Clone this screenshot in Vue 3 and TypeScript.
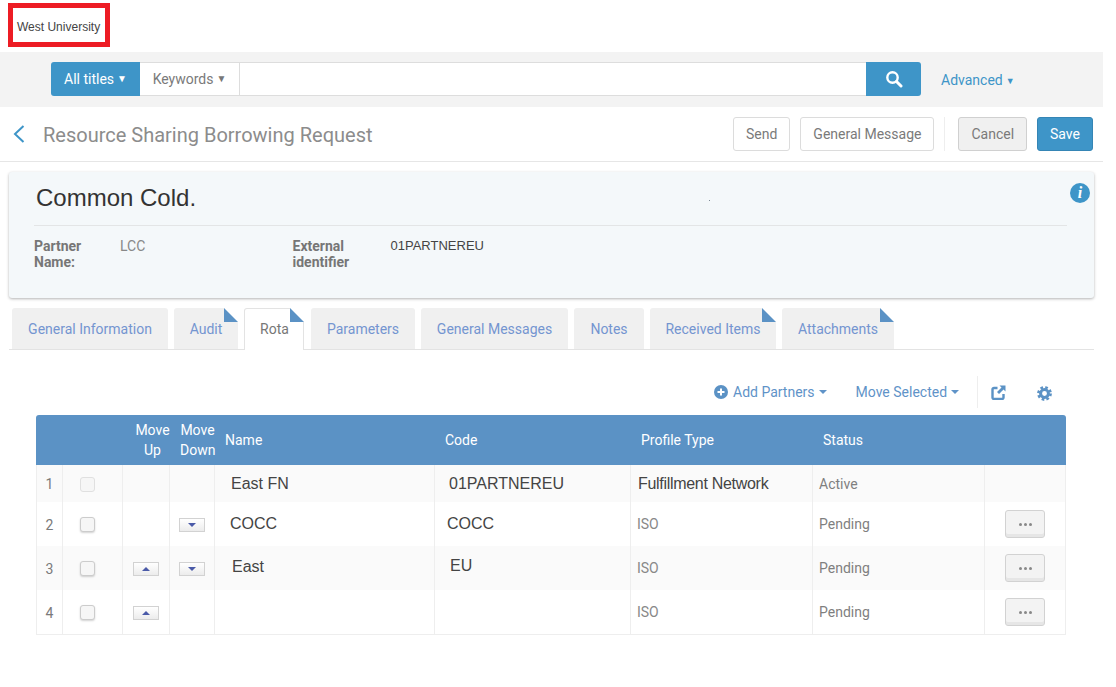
<script setup lang="ts">
interface Tab { label: string; active?: boolean; flagged?: boolean; cls: string }
interface Row {
  n: number; name: string; nameCls: string; code: string; codeCls: string; profile: string; profileBig?: boolean;
  status: string; up: boolean; down: boolean; disabled?: boolean; menu: boolean;
}
const tabs: Tab[] = [
  { label: 'General Information', cls: 't1' },
  { label: 'Audit', flagged: true, cls: 't2' },
  { label: 'Rota', active: true, flagged: true, cls: 't3' },
  { label: 'Parameters', cls: 't4' },
  { label: 'General Messages', cls: 't5' },
  { label: 'Notes', cls: 't6' },
  { label: 'Received Items', flagged: true, cls: 't7' },
  { label: 'Attachments', flagged: true, cls: 't8' },
]
const rows: Row[] = [
  { n: 1, name: 'East FN', nameCls: 'n1', code: '01PARTNEREU', codeCls: 'c1', profile: 'Fulfillment Network', profileBig: true, status: 'Active', up: false, down: false, disabled: true, menu: false },
  { n: 2, name: 'COCC', nameCls: 'n2', code: 'COCC', codeCls: 'c2', profile: 'ISO', status: 'Pending', up: false, down: true, menu: true },
  { n: 3, name: 'East', nameCls: 'n3', code: 'EU', codeCls: 'c3', profile: 'ISO', status: 'Pending', up: true, down: true, menu: true },
  { n: 4, name: '', nameCls: 'n2', code: '', codeCls: 'c2', profile: 'ISO', status: 'Pending', up: true, down: false, menu: true },
]
</script>

<template>
  <div class="page">
    <div class="brand"><div class="logo">West University</div></div>

    <div class="searchbar">
      <div class="searchgroup">
        <button class="scope">All titles<span class="caret-up">▼</span></button>
        <button class="field">Keywords<span class="caret-up grey">▼</span></button>
        <input class="query" type="text" />
        <button class="go" aria-label="Search">
          <svg width="18" height="18" viewBox="0 0 18 18"><circle cx="7.5" cy="7.5" r="5.2" fill="none" stroke="#fff" stroke-width="2.4"/><path d="M11.5 11.5l4.5 4.5" stroke="#fff" stroke-width="3" stroke-linecap="round"/></svg>
        </button>
      </div>
      <a class="advanced">Advanced<span class="adv-caret">▼</span></a>
    </div>

    <header class="pagehead">
      <svg class="back" width="14" height="20" viewBox="0 0 14 20"><path d="M11.5 2L3 10l8.500 8" fill="none" stroke="#3e95c8" stroke-width="2"/></svg>
      <h1>Resource Sharing Borrowing Request</h1>
      <div class="actions">
        <button class="btn">Send</button>
        <button class="btn">General Message</button>
        <span class="vsep"></span>
        <button class="btn cancel">Cancel</button>
        <button class="btn save">Save</button>
      </div>
    </header>

    <section class="card">
      <h2>Common Cold.</h2>
      <span class="speck"></span>
      <span class="info">i</span>
      <div class="fields">
        <div class="lbl l1">Partner Name:</div>
        <div class="val v1">LCC</div>
        <div class="lbl l2">External identifier</div>
        <div class="val v2">01PARTNEREU</div>
      </div>
    </section>

    <nav class="tabs">
      <div v-for="t in tabs" :key="t.label" class="tab" :class="[t.cls, { active: t.active }]">
        {{ t.label }}<span v-if="t.flagged" class="flag"></span>
      </div>
    </nav>

    <div class="toolbar">
      <a class="tool add">
        <svg width="14" height="14" viewBox="0 0 14 14"><circle cx="7" cy="7" r="7" fill="#5b92c5"/><path d="M7 3.500v7M3.500 7h7" stroke="#fff" stroke-width="2"/></svg>
        Add Partners<span class="down"></span>
      </a>
      <a class="tool move">Move Selected<span class="down"></span></a>
      <span class="toolsep"></span>
      <svg class="ext" width="15" height="15" viewBox="0 0 15 15"><path d="M6.500 3H3a1.500 1.500 0 0 0-1.500 1.500v8A1.500 1.500 0 0 0 3 14h8a1.500 1.500 0 0 0 1.500-1.500V9" fill="none" stroke="#5b92c5" stroke-width="2.400"/><path d="M8.500 0.500h6V6.500L12.500 4.500 8 9 6 7 10.500 2.500z" fill="#5b92c5"/></svg>
      <svg class="gear" width="15" height="15" viewBox="0 0 16 16"><circle cx="8" cy="8" r="4.200" fill="none" stroke="#5b92c5" stroke-width="3.200"/><circle cx="8" cy="8" r="6.500" fill="none" stroke="#5b92c5" stroke-width="2.800" stroke-dasharray="2.800 2.300"/></svg>
    </div>

    <table class="rota">
      <colgroup>
        <col class="w1" /><col class="w2" /><col class="w3" /><col class="w4" /><col class="w5" />
        <col class="w6" /><col class="w7" /><col class="w8" /><col class="w9" />
      </colgroup>
      <thead>
        <tr>
          <th></th><th></th>
          <th class="mvu">Move Up</th>
          <th class="mvd">Move Down</th>
          <th>Name</th><th>Code</th><th>Profile Type</th><th>Status</th><th></th>
        </tr>
      </thead>
      <tbody>
        <tr v-for="r in rows" :key="r.n" :class="{ first: r.n === 1 }">
          <td class="num">{{ r.n }}</td>
          <td class="chk"><span class="check" :class="{ off: r.disabled }"></span></td>
          <td class="ctr"><button v-if="r.up" class="mv" aria-label="Move up"><span class="tri-up"></span></button></td>
          <td class="ctr"><button v-if="r.down" class="mv" aria-label="Move down"><span class="tri-down"></span></button></td>
          <td class="big" :class="r.nameCls">{{ r.name }}</td>
          <td class="big" :class="r.codeCls">{{ r.code }}</td>
          <td :class="r.profileBig ? 'prof-big' : 'prof'">{{ r.profile }}</td>
          <td class="stat">{{ r.status }}</td>
          <td class="ctr"><button v-if="r.menu" class="more" aria-label="More"><i></i><i></i><i></i></button></td>
        </tr>
      </tbody>
    </table>
  </div>
</template>

<style>
html, body { background: #fff; }
</style>

<style scoped>
.page { width: 1103px; font-family: Roboto, "Liberation Sans", sans-serif; font-size: 14px; color: #7a7a7a; }
button { font-family: inherit; cursor: pointer; }

.brand { height: 52px; padding: 3px 0 0 8px; box-sizing: border-box; }
.logo { width: 102px; height: 44px; box-sizing: border-box; border: 5px solid #ed1c24; font: 12px/38px "Liberation Sans", sans-serif; color: #444; padding-left: 4px; white-space: nowrap; }

.searchbar { height: 55px; background: #f3f3f3; display: flex; align-items: flex-start; padding: 10px 0 0 51px; box-sizing: border-box; }
.searchgroup { display: flex; width: 870px; height: 34px; }
.scope { width: 89px; border: 0; border-radius: 3px 0 0 3px; background: #3e95c8; color: #fff; font-size: 14px; padding: 0; }
.caret-up { font-size: 10px; margin-left: 3px; position: relative; top: -2px; }
.grey { color: #777; }
.field { width: 100px; background: #fff; border: 1px solid #ddd; border-width: 1px 1px 1px 0; color: #7a7a7a; font-size: 14px; padding: 0; }
.query { flex: 1; min-width: 0; background: #fff; border: 1px solid #ddd; border-width: 1px 0; outline: none; padding: 0; }
.go { width: 55px; background: #3e95c8; border: 0; border-radius: 0 3px 3px 0; display: flex; align-items: center; justify-content: center; padding: 0; }
.advanced { margin-left: 20px; color: #3e95c8; font-size: 14px; line-height: 36px; }
.adv-caret { font-size: 9px; margin-left: 3px; position: relative; top: -1px; }

.pagehead { height: 55px; border-bottom: 1px solid #e6e6e6; box-sizing: border-box; display: flex; align-items: center; padding: 0 10px 0 12px; }
.back { flex: none; }
.pagehead h1 { margin: 2px 0 0 17px; font-size: 20px; font-weight: 400; color: #8c8c8c; white-space: nowrap; }
.actions { margin-left: auto; display: flex; align-items: center; gap: 10px; }
.btn { height: 34px; box-sizing: border-box; border: 1px solid #dcdcdc; border-radius: 3px; background: #fff; color: #7a7a7a; font-size: 14px; padding: 0 12px; }
.vsep { width: 1px; height: 34px; background: #eee; margin: 0 3px 0 0; }
.cancel { background: #f0f0f0; border-color: #d0d0d0; }
.save { background: #3e95c8; border-color: #3585b5; color: #fff; }

.card { position: relative; margin: 10px 9px 0 9px; height: 126px; box-sizing: border-box; background: #f4f8fa; border-radius: 3px; box-shadow: 0 1px 3px rgba(0,0,0,.3); padding: 0 27px 0 25px; }
.card h2 { margin: 0; height: 54px; border-bottom: 1px solid #e3e5e6; box-sizing: border-box; padding: 12px 0 0 2px; font: 400 24px/28px "Liberation Sans", sans-serif; color: #333; }
.speck { position: absolute; left: 700px; top: 28px; width: 1px; height: 1px; background: #7d8a96; }
.info { position: absolute; right: 4px; top: 11px; width: 20px; height: 20px; border-radius: 50%; background: #3e95c8; color: #fff; font: italic 700 16px/20px "Liberation Serif", serif; text-align: center; }
.fields { display: flex; padding-top: 12px; line-height: 16px; }
.lbl { font-weight: 700; color: #767676; }
.l1 { width: 86px; }
.v1 { width: 172.500px; color: #888; }
.l2 { width: 98px; }
.v2 { font: 13px/16px "Liberation Sans", sans-serif; color: #444; }

.tabs { margin: 10px 9px 0 9px; height: 42px; box-sizing: border-box; border-bottom: 1px solid #e3e3e3; display: flex; padding-left: 3px; }
.tab { position: relative; box-sizing: border-box; height: 41px; background: #f0f0f0; border-radius: 3px 3px 0 0; text-align: center; line-height: 42px; color: #7495d0; white-space: nowrap; }
.tab.active { background: #fff; color: #777; height: 42px; border: 1px solid #e3e3e3; border-bottom: 0; line-height: 40px; padding-left: 1px; }
.t1 { width: 156px; margin-right: 6px; }
.t2 { width: 64px; margin-right: 6px; }
.t3 { width: 60px; margin-right: 7px; }
.t4 { width: 104px; margin-right: 6px; }
.t5 { width: 147px; margin-right: 6px; }
.t6 { width: 70px; margin-right: 6px; }
.t7 { width: 126px; margin-right: 6px; }
.t8 { width: 112px; }
.flag { position: absolute; right: 0; top: 0; width: 0; height: 0; border: 7px solid; border-color: #fff #fff #5b92c5 #5b92c5; }
.active .flag { right: -1px; top: -1px; }

.toolbar { height: 65px; display: flex; align-items: flex-start; padding: 26px 0 0 714px; box-sizing: border-box; }
.tool { color: #5f93c8; line-height: 32px; white-space: nowrap; display: flex; align-items: center; height: 32px; }
.add svg { margin-right: 5px; }
.move { margin-left: 29px; }
.down { width: 0; height: 0; border: 4px solid transparent; border-top-color: #5f93c8; border-bottom: 0; margin-left: 4px; }
.toolsep { width: 1px; height: 32px; background: #eee; margin-left: 18px; }
.ext { margin: 9px 0 0 13px; flex: none; }
.gear { margin: 10px 0 0 31px; flex: none; }

.rota { margin-left: 36px; width: 1030px; border-collapse: separate; border-spacing: 0; table-layout: fixed; border-bottom: 1px solid #eee; }
.w1 { width: 27px; } .w2 { width: 60px; } .w3 { width: 47px; } .w4 { width: 45px; } .w5 { width: 220px; }
.w6 { width: 196px; } .w7 { width: 182px; } .w8 { width: 172px; } .w9 { width: 81px; }
thead tr { height: 50px; }
th { background: #5b92c5; color: #fff; font-weight: 400; text-align: left; padding: 0 0 0 10px; line-height: 20px; }
th:first-child { border-radius: 3px 0 0 0; }
th:last-child { border-radius: 0 3px 0 0; }
th.mvu { text-align: center; padding: 0 0 0 12px; }
th.mvd { text-align: center; padding: 0 0 0 10px; }
tbody tr { height: 44px; }
tbody tr.first { height: 37px; }
tbody tr:nth-child(odd) td { background: #fafafa; }
td { border-right: 1px solid #eee; padding: 0 0 0 6px; }
td:first-child { border-left: 1px solid #eee; padding: 1px 0 0; text-align: center; }
td.ctr { text-align: center; padding: 0; }
td.chk { padding: 0 0 0 17px; }
.num { color: #7a7a7a; }
.big { font: 16px "Liberation Sans", sans-serif; color: #444; }
.n1 { padding-left: 16px; }
.n2 { padding: 0 0 0 15px; }
.n3 { padding: 0 0 2px 17px; }
.c1 { padding: 0 0 0 14px; }
.c2 { padding: 0 0 0 12px; }
.c3 { padding: 0 0 4px 15px; }
.prof { color: #888; padding-left: 6px; }
.prof-big { font: 16px "Liberation Sans", sans-serif; letter-spacing: -0.3px; color: #444; padding: 0 0 0 7px; white-space: nowrap; }
.stat { color: #7f7f7f; padding-left: 6px; }
.check { display: inline-block; width: 15px; height: 15px; box-sizing: border-box; vertical-align: middle; border: 1px solid #ccc; border-radius: 3px; background: #f6f6f6; box-shadow: 0 1px 2px rgba(0,0,0,.18); }
.check.off { border-color: #e0e0e0; box-shadow: none; }
.mv { width: 26px; height: 14px; padding: 0; border: 1px solid #d2d2d2; background: linear-gradient(#fff, #ececec); display: inline-flex; align-items: center; justify-content: center; vertical-align: middle; }
.tri-up, .tri-down { width: 0; height: 0; border: 4px solid transparent; }
.tri-up { border-top: 0; border-bottom: 4px solid #4a5aa8; }
.tri-down { border-bottom: 0; border-top: 4px solid #4a5aa8; }
.more { width: 40px; height: 28px; padding: 0; border: 1px solid #d2d2d2; border-radius: 3px; background: #f3f3f3; box-shadow: inset 0 -3px 0 #e6e6e6; display: inline-flex; align-items: center; justify-content: center; gap: 2px; vertical-align: middle; }
.more i { width: 3px; height: 3px; border-radius: 50%; background: #888; margin-top: 1px; }
</style>
